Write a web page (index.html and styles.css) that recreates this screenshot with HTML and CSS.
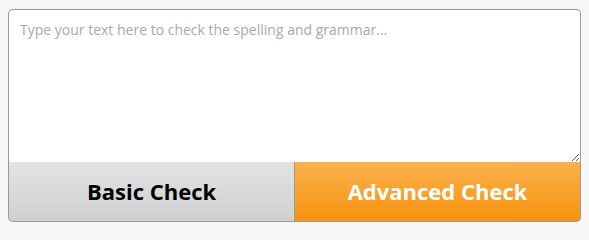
FILE: index.html
```html
<!DOCTYPE html>
<html>
<head>
<meta charset="utf-8">
<link rel="stylesheet" href="styles.css">
</head>
<body>
<div class="checker">
  <textarea class="input" placeholder="Type your text here to check the spelling and grammar..."></textarea>
  <div class="actions">
    <button class="btn btn-basic">Basic Check</button>
    <button class="btn btn-advanced">Advanced Check</button>
  </div>
</div>
</body>
</html>
```
FILE: styles.css
```css
html, body {
  margin: 0;
  padding: 0;
  background: #f7f7f7;
}
body {
  padding: 9px 8px 0 8px;
  font-family: "Open Sans", "Liberation Sans", sans-serif;
}
.checker {
  width: 573px;
  display: flex;
  flex-direction: column;
}
.input {
  display: block;
  box-sizing: border-box;
  width: 573px;
  height: 153px;
  margin: 0;
  padding: 10px 11px;
  border: 1px solid #999;
  border-bottom: none;
  border-radius: 5px 5px 0 0;
  background: #fff;
  font-family: "Open Sans", "Liberation Sans", sans-serif;
  font-size: 14px;
  line-height: 20px;
  color: #333;
  resize: vertical;
  outline: none;
}
.input::placeholder {
  color: #a9a9a9;
}
.actions {
  display: grid;
  grid-template-columns: 287px 1fr;
  height: 60px;
}
.btn {
  margin: 0;
  padding: 0 0 2px 0;
  font-family: "Open Sans", "Liberation Sans", sans-serif;
  font-weight: 700;
  font-size: 22px;
  cursor: pointer;
  border: 1px solid #999;
  border-top: none;
}
.btn-basic {
  color: #000;
  background: linear-gradient(#e3e3e3, #d0d0d0);
  border-right: 1px solid #999;
  border-radius: 0 0 0 5px;
}
.btn-advanced {
  color: #fff;
  background: linear-gradient(#fbb14d, #f7930f);
  border-left: none;
  border-radius: 0 0 5px 0;
}
```
